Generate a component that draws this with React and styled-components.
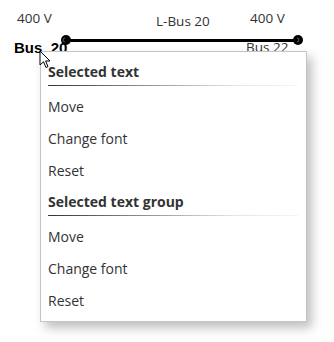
import React from "react";
import styled, { createGlobalStyle } from "styled-components";

const Global = createGlobalStyle`
  html, body { margin: 0; padding: 0; background: #fff; }
  body { width: 334px; height: 342px; overflow: hidden; font-family: "Open Sans", "Noto Sans", sans-serif; }
`;

const Canvas = styled.div`
  position: relative;
  width: 334px;
  height: 342px;
  background: #fff;
`;

const BusNode = styled.div`
  position: absolute;
  left: ${(p) => p.$x}px;
  top: 11px;
  display: flex;
  flex-direction: column;
  align-items: flex-start;
  gap: 14px;
`;

const Voltage = styled.div`
  font-size: 13.5px;
  line-height: 15px;
  color: #333;
  margin-left: ${(p) => p.$indent || 0}px;
  white-space: nowrap;
`;

const BusName = styled.div`
  font-family: ${(p) => (p.$bold ? '"Liberation Sans", Arial, sans-serif' : '"Open Sans", "Noto Sans", sans-serif')};
  font-weight: ${(p) => (p.$bold ? 700 : 400)};
  font-size: ${(p) => (p.$bold ? 15 : 13.5)}px;
  line-height: 15px;
  color: ${(p) => (p.$bold ? "#000" : "#333")};
  white-space: pre;
`;

const LineLabel = styled.div`
  position: absolute;
  left: 156px;
  top: 14px;
  font-size: 13.5px;
  line-height: 15px;
  color: #333;
  white-space: nowrap;
`;

const Wire = styled.svg`
  position: absolute;
  left: 0;
  top: 0;
`;

const Menu = styled.div`
  position: absolute;
  left: 40px;
  top: 51px;
  width: 265px;
  box-sizing: content-box;
  border: 1px solid #c4c4c4;
  background: #fff;
  box-shadow: 5px 6px 10px rgba(0, 0, 0, 0.25);
  padding: 4px 0 5px;
  display: flex;
  flex-direction: column;
`;

const Header = styled.div`
  padding: 6px 8px 4px 7px;
  display: flex;
  flex-direction: column;
  gap: 3px;
`;

const HeaderText = styled.div`
  font-weight: 700;
  font-size: 14px;
  line-height: 20px;
  color: #333;
`;

const Separator = styled.div`
  height: 1px;
  background: linear-gradient(to right, #333 0%, #888 35%, #e6e6e6 75%, #f4f4f4 100%);
`;

const Item = styled.div`
  height: 32px;
  display: flex;
  align-items: center;
  padding-left: 7px;
  font-size: 14px;
  color: #333;
`;

const Cursor = styled.svg`
  position: absolute;
  left: 39px;
  top: 50px;
`;

const sections = [
  { title: "Selected text", items: ["Move", "Change font", "Reset"] },
  { title: "Selected text group", items: ["Move", "Change font", "Reset"] },
];

export default function App() {
  return (
    <>
      <Global />
      <Canvas>
        <BusNode $x={14}>
          <Voltage $indent={3}>400 V</Voltage>
          <BusName $bold>{"Bus  20"}</BusName>
        </BusNode>
        <LineLabel>L-Bus 20</LineLabel>
        <BusNode $x={246}>
          <Voltage $indent={4}>400 V</Voltage>
          <BusName>Bus 22</BusName>
        </BusNode>
        <Wire width="334" height="60">
          <line x1="66" y1="40.5" x2="298" y2="40.5" stroke="#000" strokeWidth="3" />
          <circle cx="66" cy="40" r="5" fill="#000" />
          <path d="M65 38 A2 2 0 0 0 65 42" stroke="#777" strokeWidth="0.8" fill="none" />
          <circle cx="298" cy="40" r="5" fill="#000" />
          <path d="M297 38 A2 2 0 0 1 297 42" stroke="#777" strokeWidth="0.8" fill="none" />
        </Wire>
        <Menu>
          {sections.map((s) => (
            <React.Fragment key={s.title}>
              <Header>
                <HeaderText>{s.title}</HeaderText>
                <Separator />
              </Header>
              {s.items.map((it) => (
                <Item key={it}>{it}</Item>
              ))}
            </React.Fragment>
          ))}
        </Menu>
        <Cursor width="14" height="20" viewBox="0 0 14 20">
          <path
            d="M1 1 L1 15 L4.5 11.8 L7 17.5 L9 16.6 L6.6 11 L11 11 Z"
            fill="#fff"
            stroke="#000"
            strokeWidth="1"
            strokeLinejoin="miter"
          />
        </Cursor>
      </Canvas>
    </>
  );
}
